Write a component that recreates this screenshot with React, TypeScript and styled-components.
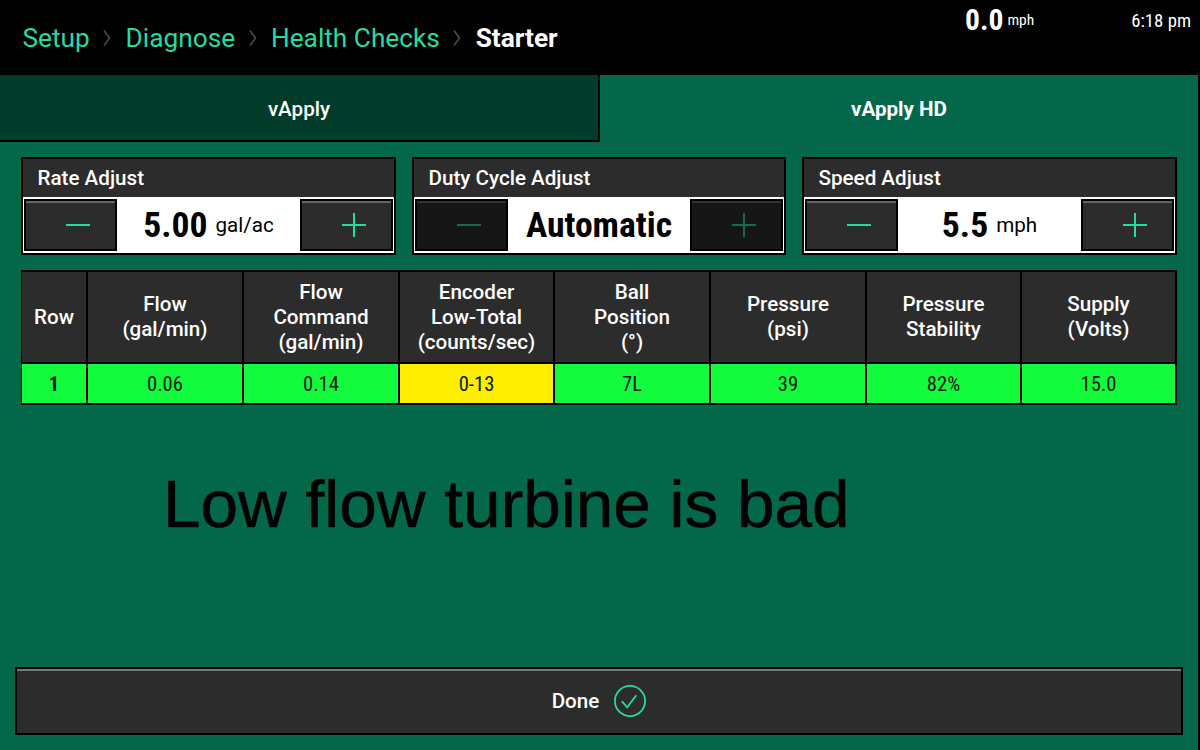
import React from "react";
import styled, { createGlobalStyle } from "styled-components";

const Global = createGlobalStyle`
  * { box-sizing: border-box; }
  body { margin: 0; background: #000; }
`;

const sans = `Roboto, "Liberation Sans", sans-serif`;
const condensed = `"Roboto Condensed", Roboto, "Liberation Sans", sans-serif`;
const accent = "#22dca6";

const Screen = styled.div`
  width: 1200px;
  height: 750px;
  overflow: hidden;
  display: flex;
  flex-direction: column;
  background: #000;
  color: #fff;
  font-family: ${sans};
`;

const Header = styled.header`
  height: 75px;
  flex: none;
  display: flex;
  justify-content: space-between;
  padding: 0 9px 0 22.5px;
`;

const Breadcrumbs = styled.nav`
  display: flex;
  align-items: center;
  height: 75px;
  font-size: 26.25px;
  white-space: nowrap;
`;

const Crumb = styled.span<{ $current?: boolean }>`
  color: ${(p) => (p.$current ? "#fff" : accent)};
  font-weight: ${(p) => (p.$current ? 700 : 400)};
`;

const Separator = styled.svg`
  width: 8px;
  height: 18px;
  margin: 0 14.2px 0 13.6px;
`;

const Status = styled.div`
  display: flex;
  height: 40px;
  align-items: center;
  font-family: ${condensed};
  font-stretch: 75%;
`;

const Speed = styled.div`
  display: flex;
  align-items: center;
  gap: 4px;
  margin-right: 97px;
`;

const SpeedValue = styled.span`
  font-size: 29.5px;
  font-weight: 700;
`;

const SpeedUnit = styled.span`
  font-size: 15.5px;
`;

const Clock = styled.span`
  font-size: 18.75px;
  padding-top: 2px;
`;

const Body = styled.main`
  flex: 1;
  width: 1198px;
  display: flex;
  flex-direction: column;
  background: #03684a;
`;

const Tabs = styled.div`
  display: flex;
  height: 67px;
  flex: none;
`;

const Tab = styled.div<{ $active?: boolean }>`
  flex: ${(p) => (p.$active ? "1" : "0 0 600px")};
  display: flex;
  align-items: center;
  justify-content: center;
  padding-top: ${(p) => (p.$active ? 0 : 2)}px;
  font-size: 20.625px;
  font-weight: ${(p) => (p.$active ? 700 : 500)};
  background: ${(p) => (p.$active ? "transparent" : "#013c2b")};
  border: solid #000;
  border-width: ${(p) => (p.$active ? "0" : "0 2px 2px 0")};
`;

const Cards = styled.div`
  display: grid;
  grid-template-columns: 375px 374px 375px;
  gap: 16px;
  margin: 15px 21px 0 21px;
`;

const Card = styled.section`
  height: 98px;
  border: 2px solid #000;
  background: #2c2c2c;
`;

const CardTitle = styled.div`
  height: 38px;
  line-height: 38px;
  padding-left: 14.5px;
  font-size: 20.625px;
  font-weight: 500;
`;

const Stepper = styled.div`
  height: 56px;
  padding: 2px 1px;
  background: #fff;
  display: flex;
`;

const StepButton = styled.button<{ $disabled?: boolean }>`
  width: 93px;
  height: 52px;
  flex: none;
  padding: 0 0 0 15px;
  display: flex;
  align-items: center;
  justify-content: center;
  border: 2px solid #000;
  background: ${(p) => (p.$disabled ? "#161616" : "#2c2c2c")};
  box-shadow: inset 0 2px 0 ${(p) => (p.$disabled ? "#333" : "#666")};
  color: ${(p) => (p.$disabled ? "#176b52" : accent)};
`;

const Reading = styled.div`
  flex: 1;
  display: flex;
  align-items: center;
  justify-content: center;
  gap: 8px;
  color: #000;
`;

const ReadingValue = styled.span`
  font-family: ${condensed};
  font-stretch: 75%;
  font-size: 35.625px;
  font-weight: 700;
`;

const ReadingUnit = styled.span`
  font-size: 20.625px;
`;

const Table = styled.div`
  display: grid;
  grid-template-columns: 64px 154px 154px 153px 154px 154px 153px 153px;
  grid-template-rows: 90px 39px;
  gap: 2px;
  padding: 2px 2px 2px 1px;
  margin: 15px 21px 0 21px;
  background: #000;
`;

const HeadCell = styled.div`
  display: flex;
  align-items: center;
  justify-content: center;
  text-align: center;
  white-space: pre-line;
  background: #2c2c2c;
  font-size: 20.625px;
  line-height: 25px;
  font-weight: 500;
`;

const DataCell = styled.div<{ $tone?: "ok" | "warn"; $strong?: boolean }>`
  display: flex;
  align-items: center;
  justify-content: center;
  background: ${(p) => (p.$tone === "warn" ? "#ffee00" : "#12fb3c")};
  color: #0a1a0a;
  font-family: ${condensed};
  font-stretch: 75%;
  font-size: 20.625px;
  font-weight: ${(p) => (p.$strong ? 700 : 400)};
`;

const Note = styled.p`
  margin: 60px 0 0 163px;
  font-family: "Liberation Sans", Arial, sans-serif;
  font-size: 67.5px;
  line-height: 78px;
  color: #000;
  -webkit-text-stroke: 0.6px #000;
  white-space: nowrap;
`;

const DoneButton = styled.button`
  margin: auto 15px 15px 15px;
  height: 68px;
  padding: 0;
  display: flex;
  align-items: center;
  justify-content: center;
  gap: 15px;
  border: 2px solid #000;
  background: #2c2c2c;
  box-shadow: inset 0 2px 0 #777;
  color: #fff;
  font-family: ${sans};
  font-size: 20.625px;
  font-weight: 500;
`;

const Chevron = () => (
  <Separator viewBox="0 0 8 18" fill="none" stroke="#4a4a4a" strokeWidth="1.6">
    <path d="M1 1.5 L6.5 9 L1 16.5" />
  </Separator>
);

const StepIcon = ({ plus }: { plus?: boolean }) => (
  <svg width="24" height="24" viewBox="0 0 24 24" fill="none" stroke="currentColor" strokeWidth="2">
    <path d={plus ? "M0 12H24M12 0V24" : "M0 12H24"} />
  </svg>
);

const CheckCircle = () => (
  <svg width="32" height="32" viewBox="0 0 32 32" fill="none" stroke={accent}>
    <circle cx="16" cy="16" r="15.1" strokeWidth="1.8" />
    <path d="M7.8 16.2 L13.2 22.3 L22.3 10.3" strokeWidth="1.8" />
  </svg>
);

const adjusts = [
  { title: "Rate Adjust", value: "5.00", unit: "gal/ac" },
  { title: "Duty Cycle Adjust", value: "Automatic", disabled: true },
  { title: "Speed Adjust", value: "5.5", unit: "mph" },
];

const columns = [
  "Row",
  "Flow\n(gal/min)",
  "Flow\nCommand\n(gal/min)",
  "Encoder\nLow-Total\n(counts/sec)",
  "Ball\nPosition\n(°)",
  "Pressure\n(psi)",
  "Pressure\nStability",
  "Supply\n(Volts)",
];

const row = ["1", "0.06", "0.14", "0-13", "7L", "39", "82%", "15.0"];

export default function App() {
  return (
    <Screen>
      <Global />
      <Header>
        <Breadcrumbs>
          <Crumb>Setup</Crumb>
          <Chevron />
          <Crumb>Diagnose</Crumb>
          <Chevron />
          <Crumb>Health Checks</Crumb>
          <Chevron />
          <Crumb $current>Starter</Crumb>
        </Breadcrumbs>
        <Status>
          <Speed>
            <SpeedValue>0.0</SpeedValue>
            <SpeedUnit>mph</SpeedUnit>
          </Speed>
          <Clock>6:18 pm</Clock>
        </Status>
      </Header>
      <Body>
        <Tabs>
          <Tab>vApply</Tab>
          <Tab $active>vApply HD</Tab>
        </Tabs>
        <Cards>
          {adjusts.map((a) => (
            <Card key={a.title}>
              <CardTitle>{a.title}</CardTitle>
              <Stepper>
                <StepButton $disabled={a.disabled}>
                  <StepIcon />
                </StepButton>
                <Reading>
                  <ReadingValue>{a.value}</ReadingValue>
                  {a.unit && <ReadingUnit>{a.unit}</ReadingUnit>}
                </Reading>
                <StepButton $disabled={a.disabled}>
                  <StepIcon plus />
                </StepButton>
              </Stepper>
            </Card>
          ))}
        </Cards>
        <Table>
          {columns.map((c) => (
            <HeadCell key={c}>{c}</HeadCell>
          ))}
          {row.map((v, i) => (
            <DataCell key={v} $strong={i === 0} $tone={i === 3 ? "warn" : "ok"}>
              {v}
            </DataCell>
          ))}
        </Table>
        <Note>Low flow turbine is bad</Note>
        <DoneButton>
          Done
          <CheckCircle />
        </DoneButton>
      </Body>
    </Screen>
  );
}
